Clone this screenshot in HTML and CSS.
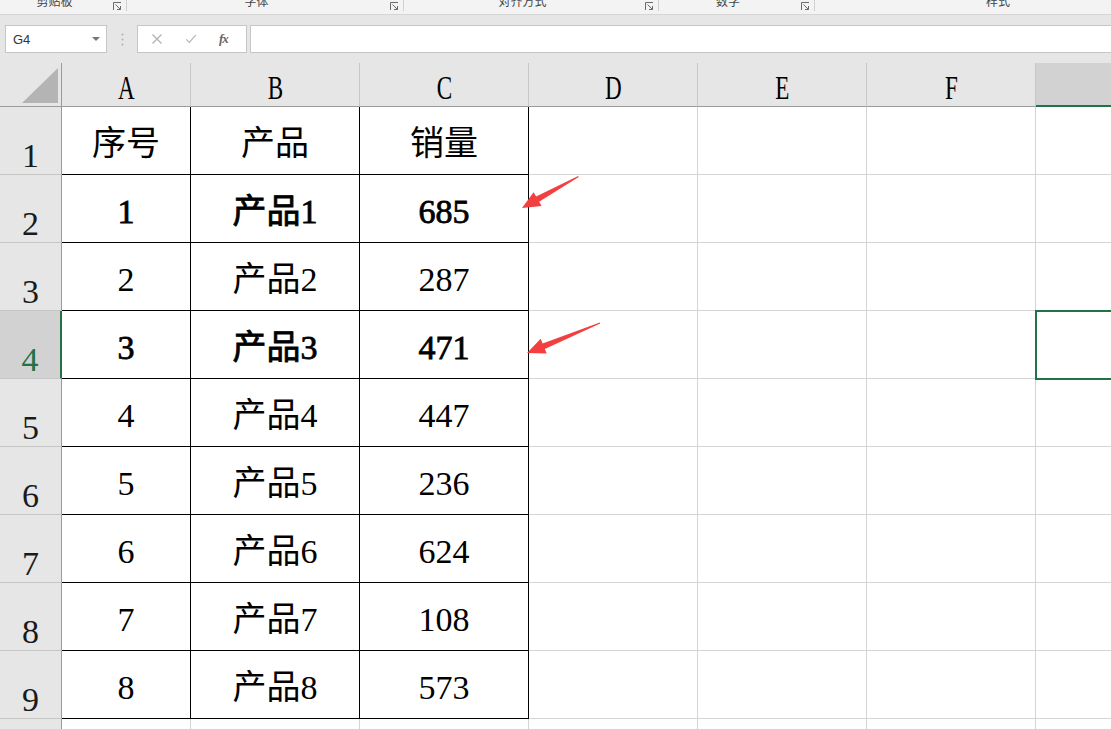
FILE: index.html
```html
<!DOCTYPE html>
<html lang="zh-CN">
  <head>
    <meta charset="UTF-8" />
    <meta name="viewport" content="width=device-width, initial-scale=1.0" />
    <title>工作簿1 - Excel</title>
    <link rel="stylesheet" href="styles.css">
  </head>
  <body>
    <div class="ribbon">
      <div class="group g-clip">
        <span class="group-label">剪贴板</span>
        <svg class="launcher" viewBox="0 0 9 9"><path d="M0.5 8 V0.5 H8" /><path d="M2.5 2.5 L7.5 7.5 M4 7.5 H7.5 V4" /></svg>
      </div>
      <div class="group g-font">
        <span class="group-label">字体</span>
        <svg class="launcher" viewBox="0 0 9 9"><path d="M0.5 8 V0.5 H8" /><path d="M2.5 2.5 L7.5 7.5 M4 7.5 H7.5 V4" /></svg>
      </div>
      <div class="group g-align">
        <span class="group-label">对齐方式</span>
        <svg class="launcher" viewBox="0 0 9 9"><path d="M0.5 8 V0.5 H8" /><path d="M2.5 2.5 L7.5 7.5 M4 7.5 H7.5 V4" /></svg>
      </div>
      <div class="group g-num">
        <span class="group-label">数字</span>
        <svg class="launcher" viewBox="0 0 9 9"><path d="M0.5 8 V0.5 H8" /><path d="M2.5 2.5 L7.5 7.5 M4 7.5 H7.5 V4" /></svg>
      </div>
      <div class="group g-style">
        <span class="group-label">样式</span>
      </div>
    </div>

    <div class="formula-bar">
      <div class="name-box">
        <span>G4</span>
        <svg class="drop" viewBox="0 0 8 4"><path d="M0 0 H8 L4 4 Z" /></svg>
      </div>
      <div class="dots">
        <svg viewBox="0 0 3 13" width="3" height="13"><circle cx="1.5" cy="1.5" r="1" /><circle cx="1.5" cy="6.5" r="1" /><circle cx="1.5" cy="11.5" r="1" /></svg>
      </div>
      <div class="fx-box">
        <svg class="fx-icon" viewBox="0 0 12 12"><path d="M1.5 1.5 L10.5 10.5 M10.5 1.5 L1.5 10.5" /></svg>
        <svg class="fx-icon" viewBox="0 0 14 12"><path d="M1.5 6.5 L5 10 L12.5 1.5" /></svg>
        <span class="fx">fx</span>
      </div>
      <div class="formula-input"></div>
    </div>

    <div class="sheet">
      <div class="c corner"><div class="corner-tri"></div></div>
      <div class="c ch"><span class="letter">A</span></div>
      <div class="c ch"><span class="letter">B</span></div>
      <div class="c ch"><span class="letter">C</span></div>
      <div class="c ch"><span class="letter">D</span></div>
      <div class="c ch"><span class="letter">E</span></div>
      <div class="c ch"><span class="letter">F</span></div>
      <div class="c ch active"></div>

      <div class="c rh">1</div>
      <div class="c t">序号</div>
      <div class="c t">产品</div>
      <div class="c t">销量</div>
      <div class="c"></div><div class="c"></div><div class="c"></div><div class="c"></div>

      <div class="c rh">2</div>
      <div class="c t b">1</div>
      <div class="c t b">产品1</div>
      <div class="c t b">685</div>
      <div class="c"></div><div class="c"></div><div class="c"></div><div class="c"></div>

      <div class="c rh">3</div>
      <div class="c t">2</div>
      <div class="c t">产品2</div>
      <div class="c t">287</div>
      <div class="c"></div><div class="c"></div><div class="c"></div><div class="c"></div>

      <div class="c rh active">4</div>
      <div class="c t b">3</div>
      <div class="c t b">产品3</div>
      <div class="c t b">471</div>
      <div class="c"></div><div class="c"></div><div class="c"></div><div class="c sel"></div>

      <div class="c rh">5</div>
      <div class="c t">4</div>
      <div class="c t">产品4</div>
      <div class="c t">447</div>
      <div class="c"></div><div class="c"></div><div class="c"></div><div class="c"></div>

      <div class="c rh">6</div>
      <div class="c t">5</div>
      <div class="c t">产品5</div>
      <div class="c t">236</div>
      <div class="c"></div><div class="c"></div><div class="c"></div><div class="c"></div>

      <div class="c rh">7</div>
      <div class="c t">6</div>
      <div class="c t">产品6</div>
      <div class="c t">624</div>
      <div class="c"></div><div class="c"></div><div class="c"></div><div class="c"></div>

      <div class="c rh">8</div>
      <div class="c t">7</div>
      <div class="c t">产品7</div>
      <div class="c t">108</div>
      <div class="c"></div><div class="c"></div><div class="c"></div><div class="c"></div>

      <div class="c rh">9</div>
      <div class="c t">8</div>
      <div class="c t">产品8</div>
      <div class="c t">573</div>
      <div class="c"></div><div class="c"></div><div class="c"></div><div class="c"></div>

      <div class="c rh">10</div>
      <div class="c"></div><div class="c"></div><div class="c"></div>
      <div class="c"></div><div class="c"></div><div class="c"></div><div class="c"></div>
    </div>

    <!-- annotation arrows drawn over the sheet -->
    <svg class="marks" viewBox="0 0 1111 729" width="1111" height="729">
      <polygon points="522,208 533.6,192.2 536.1,196.5 578.2,176.1 578.7,176.9 539.1,201.7 541.6,206" />
      <polygon points="527,353 540.7,338.8 542.6,343.4 599.8,322.5 600.2,323.5 544.8,349 546.7,353.6" />
    </svg>
  </body>
</html>
```

FILE: styles.css
```css
body {
  margin: 0;
  width: 1111px;
  height: 729px;
  overflow: hidden;
  position: relative;
  background: #fff;
  font-family: "Liberation Sans", "Noto Sans CJK SC", sans-serif;
}

/* ribbon group labels (cut off at the top) */
.ribbon {
  display: flex;
  height: 14px;
  background: #f3f3f3;
  border-bottom: 1px solid #d5d5d5;
  overflow: hidden;
}
.group {
  display: flex;
  align-items: flex-start;
  flex-shrink: 0;
  height: 11px;
  box-sizing: border-box;
  border-right: 1px solid #d0d0d0;
}
.g-clip { width: 127px; }
.g-font { width: 277px; }
.g-align { width: 255px; }
.g-num { width: 156px; }
.g-style { width: 366px; border-right: none; }
.group-label {
  flex: 1;
  text-align: center;
  font-family: "Noto Sans CJK SC", sans-serif;
  font-size: 12px;
  line-height: 14px;
  margin-top: -6px;
  color: #444;
}
.launcher {
  width: 9px;
  height: 9px;
  margin: 2px 4px 0 4px;
  fill: none;
  stroke: #6a6a6a;
  stroke-width: 1;
}

/* name box + formula bar */
.formula-bar {
  display: flex;
  height: 48px;
  padding: 10px 0 10px 5px;
  box-sizing: border-box;
  background: #e6e6e6;
}
.name-box {
  width: 102px;
  background: #fff;
  border: 1px solid #c6c6c6;
  box-sizing: border-box;
  display: flex;
  align-items: center;
  justify-content: space-between;
  padding: 0 6px 0 7px;
  font-size: 13px;
  color: #333;
}
.drop {
  width: 8px;
  height: 4px;
  fill: #777;
}
.dots {
  width: 30px;
  display: flex;
  align-items: center;
  justify-content: center;
  fill: #b0b0b0;
}
.fx-box {
  width: 110px;
  margin-right: 3px;
  background: #fff;
  border: 1px solid #c6c6c6;
  box-sizing: border-box;
  display: flex;
  align-items: center;
  padding-left: 13px;
  gap: 22px;
}
.fx-icon {
  width: 12px;
  height: 12px;
  fill: none;
  stroke: #b4b4b4;
  stroke-width: 1.4;
}
.fx {
  font-family: "Liberation Serif", serif;
  font-style: italic;
  font-weight: bold;
  font-size: 13px;
  color: #666;
  letter-spacing: -1px;
}
.formula-input {
  flex: 1;
  background: #fff;
  border: 1px solid #c6c6c6;
  border-right: none;
}

/* grid */
.sheet {
  display: grid;
  grid-template-columns: 62px 129px repeat(6, 169px);
  grid-template-rows: 44px;
  grid-auto-rows: 68px;
}
.c {
  box-sizing: border-box;
  border-right: 1px solid #d4d4d4;
  border-bottom: 1px solid #d4d4d4;
  display: flex;
  justify-content: center;
  align-items: center;
  padding-top: 7px;
  font-family: "Liberation Serif", "Noto Sans CJK SC", serif;
  font-size: 34px;
  line-height: 34px;
  color: #000;
}
.t {
  border-right-color: #000;
  border-bottom-color: #000;
}
.b {
  -webkit-text-stroke: 0.8px #000;
}
.corner {
  background: #e6e6e6;
  border-right: 1px solid #9b9b9b;
  border-bottom: 1px solid #9b9b9b;
  justify-content: flex-end;
  align-items: flex-end;
  padding: 0 3px 3px 0;
}
.corner-tri {
  width: 36px;
  height: 35px;
  background: #b4b4b4;
  clip-path: polygon(100% 0, 100% 100%, 0 100%);
}
.ch {
  background: #e6e6e6;
  border-right-color: #c6c6c6;
  border-bottom-color: #9b9b9b;
  padding-top: 6px;
}
.ch.active {
  background: #d2d2d2;
  border-bottom: 2px solid #217346;
}
.letter {
  display: inline-block;
  transform: scaleX(0.68);
}
.rh {
  background: #e6e6e6;
  border-right-color: #9b9b9b;
  border-bottom-color: #c6c6c6;
  align-items: flex-end;
  padding: 0 0 1px;
  color: #1a1a1a;
}
.rh.active {
  background: #d2d2d2;
  color: #217346;
  border-right: 2px solid #217346;
}
.sel {
  position: relative;
}
.sel::after {
  content: "";
  position: absolute;
  left: -1px;
  top: -1px;
  right: -2px;
  bottom: -2px;
  border: 2px solid #217346;
}

.marks {
  position: absolute;
  left: 0;
  top: 0;
  pointer-events: none;
  fill: #f33f3f;
}
```
